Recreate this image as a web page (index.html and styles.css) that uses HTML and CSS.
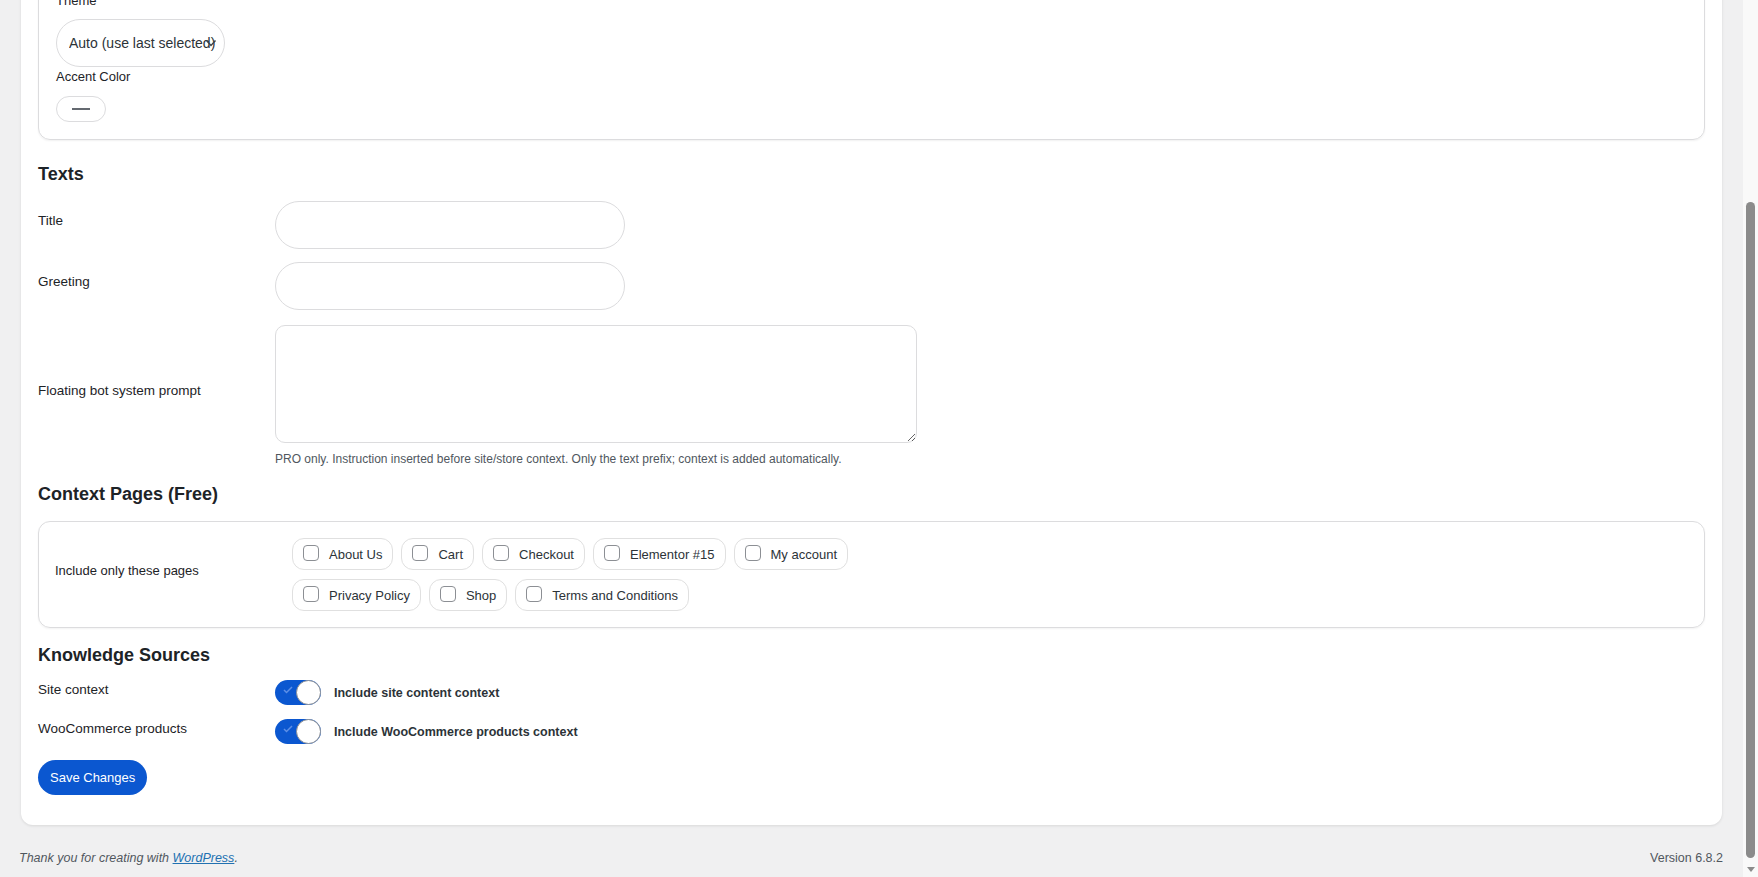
FILE: index.html
```html
<!DOCTYPE html>
<html lang="en">
<head>
    <meta charset="UTF-8">
    <meta name="viewport" content="width=device-width, initial-scale=1.0">
    <title>Chatbot Settings</title>
    <link rel="stylesheet" href="styles.css">
</head>
<body>
<div class="screen">
    <div class="page">
        <div class="wrap">
            <div class="panel">
                <label class="field-label" for="theme">Theme</label>
                <div class="select-box">
                    <select id="theme">
                        <option>Auto (use last selected)</option>
                        <option>Light</option>
                        <option>Dark</option>
                    </select>
                    <svg class="chevron" width="12" height="10" viewBox="0 0 12 10"><polyline points="1.5,2.5 6,7.5 10.5,2.5" fill="none" stroke="#3c434a" stroke-width="1.4"/></svg>
                </div>
                <label class="field-label accent-label">Accent Color</label>
                <button type="button" class="color-btn"><span class="dash"></span></button>
            </div>

            <h2>Texts</h2>
            <div class="form-grid">
                <label class="row-label" for="title">Title</label>
                <div><input type="text" id="title" class="text-input"></div>

                <label class="row-label" for="greeting">Greeting</label>
                <div><input type="text" id="greeting" class="text-input"></div>

                <label class="row-label" for="prompt">Floating bot system prompt</label>
                <div>
                    <textarea id="prompt" class="prompt-area"></textarea>
                    <p class="description">PRO only. Instruction inserted before site/store context. Only the text prefix; context is added automatically.</p>
                </div>
            </div>

            <h2>Context Pages (Free)</h2>
            <div class="pages-card">
                <div class="row-label">Include only these pages</div>
                <div class="chips">
                    <label class="chip"><input type="checkbox"> About Us</label>
                    <label class="chip"><input type="checkbox"> Cart</label>
                    <label class="chip"><input type="checkbox"> Checkout</label>
                    <label class="chip"><input type="checkbox"> Elementor #15</label>
                    <label class="chip"><input type="checkbox"> My account</label>
                    <label class="chip"><input type="checkbox"> Privacy Policy</label>
                    <label class="chip"><input type="checkbox"> Shop</label>
                    <label class="chip"><input type="checkbox"> Terms and Conditions</label>
                </div>
            </div>

            <h2 class="knowledge-title">Knowledge Sources</h2>
            <div class="knowledge-grid">
                <div class="row-label">Site context</div>
                <label class="toggle-row">
                    <span class="toggle"><svg class="tick" width="10" height="8" viewBox="0 0 10 8"><polyline points="1,4 3.5,6.5 9,1" fill="none" stroke="#5d8fe6" stroke-width="1.5"/></svg><span class="knob"></span></span>
                    Include site content context
                </label>

                <div class="row-label">WooCommerce products</div>
                <label class="toggle-row">
                    <span class="toggle"><svg class="tick" width="10" height="8" viewBox="0 0 10 8"><polyline points="1,4 3.5,6.5 9,1" fill="none" stroke="#5d8fe6" stroke-width="1.5"/></svg><span class="knob"></span></span>
                    Include WooCommerce products context
                </label>
            </div>

            <button type="button" class="save-btn">Save Changes</button>
        </div>

        <footer class="footer">
            <span class="thanks">Thank you for creating with <a href="#">WordPress</a>.</span>
            <span>Version 6.8.2</span>
        </footer>
    </div>

    <div class="scrollbar">
        <div class="thumb"></div>
        <span class="arrow"></span>
    </div>
</div>
</body>
</html>
```

FILE: styles.css
```css
body {
    margin: 0;
    background-color: #f0f0f1;
    font-family: "Liberation Sans", Arial, sans-serif;
    font-size: 13px;
    color: #1d2327;
    overflow: hidden;
}
.screen {
    display: flex;
    height: 877px;
}
.page {
    flex: 1;
    overflow: hidden;
}
.wrap {
    margin: -43px 21px 0 21px;
    padding: 17px 17px 30px;
    background: white;
    border-radius: 12px;
    box-shadow: 0 1px 3px rgba(0, 0, 0, 0.1);
}
.panel {
    padding: 17px 17px 17px;
    border: 1px solid #dcdcde;
    border-radius: 12px;
    box-shadow: 0 1px 2px rgba(0, 0, 0, 0.06);
    margin-bottom: 22px;
}
.field-label {
    display: block;
    line-height: 18px;
    margin-bottom: 9px;
}
.accent-label {
    margin-top: 1px;
    margin-bottom: 10px;
}
.select-box {
    position: relative;
    width: 169px;
}
.select-box select {
    appearance: none;
    width: 100%;
    height: 48px;
    padding: 0 2px 0 12px;
    border: 1px solid #dcdcde;
    border-radius: 24px;
    background: white;
    font-family: inherit;
    font-size: 14px;
    color: #2c3338;
}
.chevron {
    position: absolute;
    right: 8px;
    top: 19px;
}
.color-btn {
    display: flex;
    align-items: center;
    justify-content: center;
    width: 50px;
    height: 26px;
    padding: 0;
    border: 1px solid #dcdcde;
    border-radius: 13px;
    background: white;
}
.dash {
    width: 18px;
    height: 2px;
    background: #646970;
}
h2 {
    margin: 15px 0 15px;
    font-size: 18px;
    line-height: 24px;
    font-weight: bold;
    color: #1d2327;
}
.knowledge-title {
    margin-bottom: 13px;
}
.form-grid, .knowledge-grid {
    display: grid;
    grid-template-columns: 237px 1fr;
    align-items: center;
}
.form-grid {
    row-gap: 13px;
}
.row-label {
    font-size: 13.5px;
    line-height: 18px;
    padding-bottom: 8px;
}
.text-input {
    display: block;
    width: 350px;
    height: 48px;
    box-sizing: border-box;
    border: 1px solid #dcdcde;
    border-radius: 24px;
    background: white;
}
.prompt-area {
    display: block;
    width: 642px;
    height: 118px;
    box-sizing: border-box;
    margin-top: 2px;
    border: 1px solid #dcdcde;
    border-radius: 10px;
    background: white;
}
.description {
    margin: 8px 0 0;
    font-size: 12px;
    line-height: 16px;
    color: #50575e;
}
.pages-card {
    display: grid;
    grid-template-columns: 237px 1fr;
    align-items: center;
    padding: 16px;
    border: 1px solid #dcdcde;
    border-radius: 12px;
    box-shadow: 0 1px 2px rgba(0, 0, 0, 0.05);
}
.pages-card .row-label {
    font-size: 13px;
}
.chips {
    display: flex;
    flex-wrap: wrap;
    gap: 9px 8px;
    max-width: 560px;
}
.chip {
    display: inline-flex;
    align-items: center;
    gap: 10px;
    height: 32px;
    box-sizing: border-box;
    padding: 0 10px;
    border: 1px solid #e0e0e0;
    border-radius: 12px;
    color: #2c3338;
}
.chip input {
    appearance: none;
    width: 16px;
    height: 16px;
    margin: 0 0 2px;
    border: 1px solid #8c8f94;
    border-radius: 4px;
    background: white;
}
.knowledge-grid {
    row-gap: 14px;
}
.knowledge-grid .row-label {
    padding-bottom: 6px;
}
.toggle-row {
    display: flex;
    align-items: center;
    gap: 13px;
    font-size: 12.5px;
    font-weight: bold;
    color: #2c3338;
}
.toggle {
    position: relative;
    display: inline-block;
    width: 46px;
    height: 25px;
    border-radius: 13px;
    background: #0b57d0;
}
.tick {
    position: absolute;
    left: 8px;
    top: 6px;
}
.knob {
    position: absolute;
    right: 0;
    top: 0;
    width: 23px;
    height: 23px;
    border: 1px solid #8c8f94;
    border-radius: 50%;
    background: white;
}
.save-btn {
    display: block;
    margin-top: 16px;
    height: 35px;
    padding: 0 12px;
    border: none;
    border-radius: 18px;
    background: #0b57d0;
    color: white;
    font-family: inherit;
    font-size: 13px;
}
.footer {
    display: flex;
    justify-content: space-between;
    padding: 0 20px 0 19px;
    margin-top: 24px;
    font-size: 12.5px;
    line-height: 18px;
    color: #50575e;
}
.thanks {
    font-style: italic;
}
.thanks a {
    color: #2271b1;
}
.scrollbar {
    display: flex;
    flex-direction: column;
    align-items: center;
    width: 15px;
    padding-top: 202px;
    background: #f9f9f9;
}
.thumb {
    width: 9px;
    height: 656px;
    border-radius: 5px;
    background: #8b8b8b;
}
.arrow {
    margin-top: 9px;
    width: 0;
    height: 0;
    border-left: 4px solid transparent;
    border-right: 4px solid transparent;
    border-top: 5px solid #8b8b8b;
}
```
